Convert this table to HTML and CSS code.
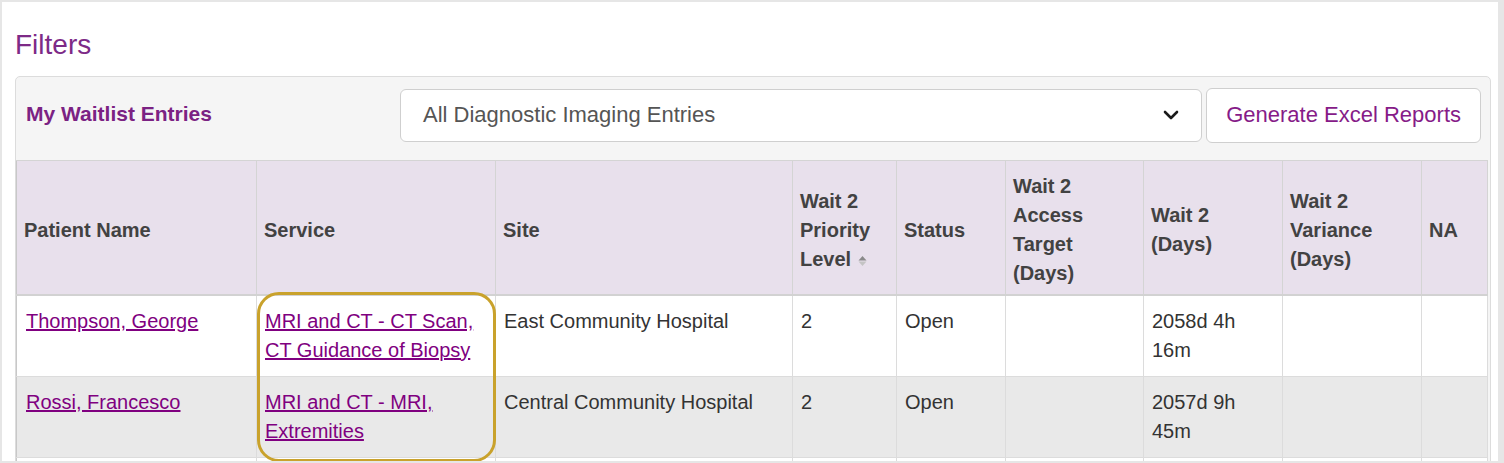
FILE: index.html
```html
<!DOCTYPE html>
<html lang="en">
<head>
<meta charset="utf-8">
<title>Filters</title>
<link rel="stylesheet" href="styles.css">
</head>
<body>
<div class="frame">
  <h2 class="title">Filters</h2>
  <div class="panel">
    <div class="panel-head">
      <div class="panel-label">My Waitlist Entries</div>
      <div class="select">
        <span class="select-text">All Diagnostic Imaging Entries</span>
        <svg class="chev" width="16" height="10" viewBox="0 0 16 10"><path d="M2 2 L8 8 L14 2" fill="none" stroke="#1a1a1a" stroke-width="2.6" stroke-linecap="round" stroke-linejoin="round"/></svg>
      </div>
      <div class="btn">Generate Excel Reports</div>
    </div>
    <div class="table-wrap">
      <table class="grid">
        <colgroup>
          <col class="c1"><col class="c2"><col class="c3"><col class="c4"><col class="c5"><col class="c6"><col class="c7"><col class="c8"><col>
        </colgroup>
        <thead>
          <tr>
            <th>Patient Name</th>
            <th>Service</th>
            <th>Site</th>
            <th>Wait 2 Priority Level <svg class="sort" width="9" height="12" viewBox="0 0 9 12"><path d="M4.5 1 L8.5 5.5 L0.5 5.5 Z" fill="#8a8a8a"/><path d="M4.5 11 L8.5 6.5 L0.5 6.5 Z" fill="#c4c4c4"/></svg></th>
            <th>Status</th>
            <th>Wait 2 Access Target (Days)</th>
            <th>Wait 2 (Days)</th>
            <th>Wait 2 Variance (Days)</th>
            <th>NA</th>
          </tr>
        </thead>
        <tbody>
          <tr>
            <td><a href="#">Thompson, George</a></td>
            <td><a href="#">MRI and CT - CT Scan, CT Guidance of Biopsy</a></td>
            <td>East Community Hospital</td>
            <td>2</td>
            <td>Open</td>
            <td></td>
            <td>2058d 4h 16m</td>
            <td></td>
            <td></td>
          </tr>
          <tr class="alt">
            <td><a href="#">Rossi, Francesco</a></td>
            <td><a href="#">MRI and CT - MRI, Extremities</a></td>
            <td>Central Community Hospital</td>
            <td>2</td>
            <td>Open</td>
            <td></td>
            <td>2057d 9h 45m</td>
            <td></td>
            <td></td>
          </tr>
          <tr class="blank">
            <td></td><td></td><td></td><td></td><td></td><td></td><td></td><td></td><td></td>
          </tr>
        </tbody>
      </table>
      <div class="highlight"></div>
    </div>
  </div>
</div>
</body>
</html>
```

FILE: styles.css
```css
* { box-sizing: border-box; }
html, body { margin: 0; padding: 0; background: #ffffff; }
body { font-family: "Liberation Sans", Arial, sans-serif; color: #333333; }

.frame {
  width: 1504px;
  height: 463px;
  overflow: hidden;
  border: 2px solid #e6e6e6;
  border-right-width: 6px;
  padding: 0 7px 0 13px;
  background: #ffffff;
}

.title {
  margin: 27px 0 15px 0;
  font-size: 28px;
  line-height: 32px;
  font-weight: normal;
  color: #7d2a87;
}

.panel {
  border: 1px solid #dcdcdc;
  border-radius: 5px;
  background: #f5f5f5;
}

.panel-head {
  display: flex;
  align-items: center;
  height: 83px;
  padding: 0 9px 7px 10px;
}

.panel-label {
  flex: 0 0 374px;
  margin-bottom: 3px;
  font-size: 21px;
  font-weight: bold;
  color: #7b2283;
}

.select {
  flex: 1 1 auto;
  height: 53px;
  display: flex;
  align-items: center;
  justify-content: space-between;
  padding: 0 22px 0 22px;
  background: #ffffff;
  border: 1px solid #cfcfcf;
  border-radius: 6px;
  font-size: 22px;
  color: #555555;
}

.chev { display: block; }

.btn {
  flex: 0 0 auto;
  margin-left: 4px;
  height: 55px;
  display: flex;
  align-items: center;
  padding: 0 19px;
  background: #ffffff;
  border: 1px solid #cfcfcf;
  border-radius: 6px;
  font-size: 22px;
  color: #861b88;
}

.table-wrap { position: relative; }

.grid {
  width: calc(100% - 2px);
  table-layout: fixed;
  border-collapse: collapse;
  font-size: 20px;
  line-height: 29px;
}

.c1 { width: 240px; }
.c2 { width: 239px; }
.c3 { width: 297px; }
.c4 { width: 104px; }
.c5 { width: 109px; }
.c6 { width: 138px; }
.c7 { width: 139px; }
.c8 { width: 139px; }

.grid th {
  background: #e8e0ec;
  color: #424242;
  font-weight: bold;
  text-align: left;
  vertical-align: middle;
  padding: 11px 7px 6px 7px;
  border: 1px solid #d4d4d4;
  border-bottom: 2px solid #d2d2d2;
}

.grid th:first-child, .grid td:first-child { border-left: 1px solid #c8c8c8; }

.grid td {
  background: #ffffff;
  vertical-align: top;
  padding: 11px 8px 11px 8px;
  border: 1px solid #dcdcdc;
  color: #333333;
}

.grid td:first-child { padding-left: 9px; }

.grid tr.alt td { background: #e9e9e9; }
.grid tr.blank td { height: 40px; }

.grid a { color: #800080; text-decoration: underline; }

.sort { vertical-align: -1px; margin-left: 1px; }

.highlight {
  position: absolute;
  left: 241px;
  top: 132px;
  width: 239px;
  height: 170px;
  border: 3px solid #c9a22c;
  border-radius: 22px;
  pointer-events: none;
}
```
